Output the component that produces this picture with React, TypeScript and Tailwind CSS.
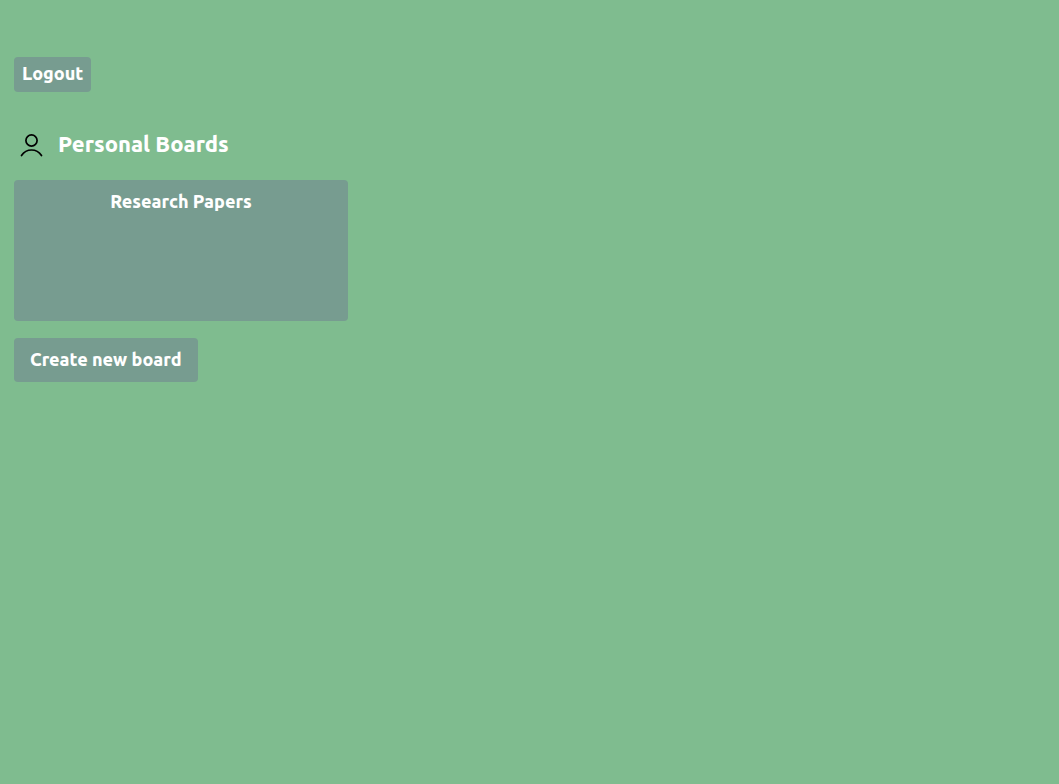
export default function App() {
  return (
    <main className="min-h-screen bg-[#7fbc8f] px-3.5 pt-[57px] font-['Ubuntu','Noto_Sans',sans-serif] font-black text-white">
      <button type="button" className="block h-[35px] rounded bg-[#779c90] px-2 pb-1 text-lg leading-6">
        Logout
      </button>
      <section className="mt-8">
        <header className="mb-3.5 flex h-[42px] items-center gap-3.5">
          <svg
            className="ml-1.5 h-6 w-6"
            viewBox="0 0 24 24"
            fill="none"
            stroke="#000"
            strokeWidth="1.7"
            strokeLinecap="round"
            aria-hidden="true"
          >
            <circle cx="11.5" cy="7.5" r="5.6" />
            <path d="M1.500 22.500c2.300-3.500 5.800-5.500 10-5.500S19.200 19 21.500 22.500" />
          </svg>
          <h1 className="pb-0.5 text-[22px] leading-8">Personal Boards</h1>
        </header>
        <a
          href="#research-papers"
          className="block h-[141px] w-full max-w-[334px] rounded bg-[#779c90] pt-[9px] text-center text-lg leading-6"
        >
          Research Papers
        </a>
        <button type="button" className="mt-[17px] h-11 rounded bg-[#779c90] px-4 pb-0.5 text-lg leading-6">
          Create new board
        </button>
      </section>
    </main>
  );
}
